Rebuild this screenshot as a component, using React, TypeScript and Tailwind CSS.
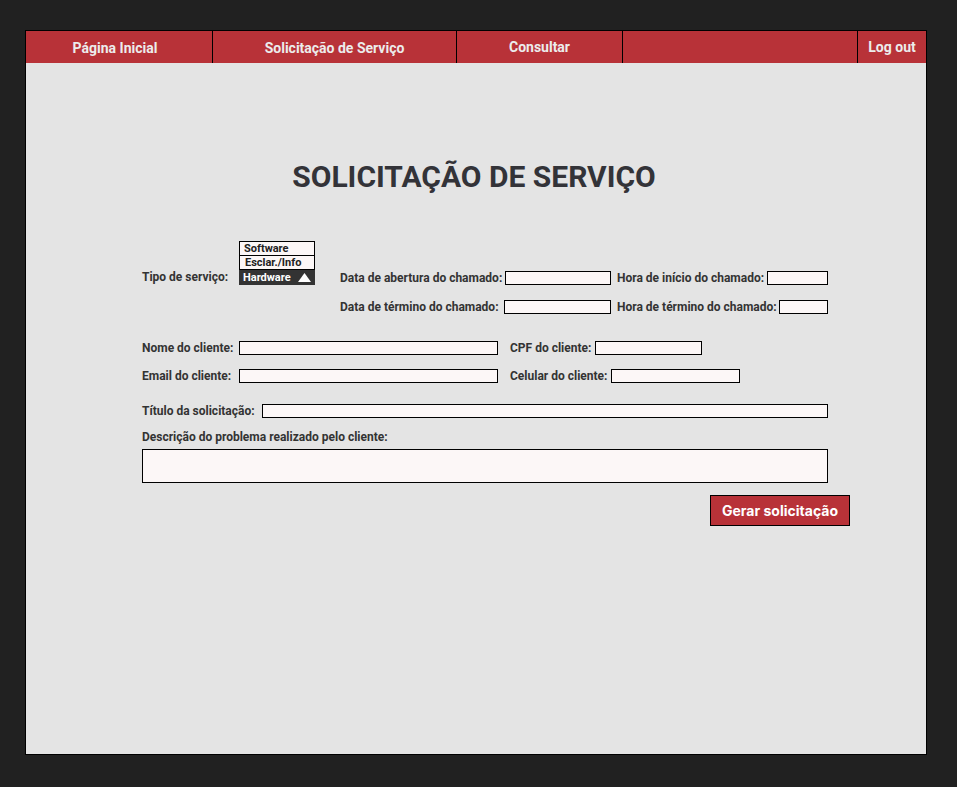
import React from "react";

const inp = "h-[14px] border border-black bg-[#fcf7f7]";
const lbl = "text-[12px] font-bold text-[#333333] whitespace-nowrap leading-none";

export default function App() {
  return (
    <div className="min-h-[787px] w-[957px] bg-[#212121] pt-[30px] pl-[25px]" style={{ fontFamily: "Roboto, 'Liberation Sans', sans-serif" }}>
      <div className="w-[902px] h-[725px] border border-black bg-[#e4e4e4] flex flex-col">
        <nav className="h-[32px] flex bg-[#b83238] text-[14px] font-bold text-[#ececec]">
          <div className="w-[187px] border-r border-black flex items-center justify-center pt-[2px] pr-[8px]">Página Inicial</div>
          <div className="w-[244px] border-r border-black flex items-center justify-center pt-[2px]">Solicitação de Serviço</div>
          <div className="w-[166px] border-r border-black flex items-center justify-center">Consultar</div>
          <div className="w-[235px] border-r border-black"></div>
          <div className="w-[68px] flex items-center justify-center">Log out</div>
        </nav>

        <h1 className="mt-[96px] text-center text-[30px] font-bold text-[#333338] leading-[36px] pr-[4px]">SOLICITAÇÃO DE SERVIÇO</h1>

        <div className="pl-[116px] mt-[47px] flex flex-col">
          <div className="flex items-start">
            <div className="flex items-end h-[43px]">
              <span className={lbl + " w-[97px] pb-[2px]"}>Tipo de serviço:</span>
              <div className="w-[76px] flex flex-col text-[11px] font-bold leading-none">
                <div className="h-[15px] border border-black bg-[#fcf7f7] text-[#222] pl-[4px] flex items-center">Software</div>
                <div className="h-[14px] border border-t-0 border-black bg-[#fcf7f7] text-[#222] pl-[5px] flex items-center">Esclar./Info</div>
                <div className="h-[15px] bg-[#333333] text-white pl-[4px] pr-[4px] flex items-center justify-between">
                  <span>Hardware</span>
                  <svg width="13" height="9" viewBox="0 0 13 9"><polygon points="6.5,0 13,9 0,9" fill="#ffffff" /></svg>
                </div>
              </div>
            </div>
            <div className="ml-[25px] mt-[29px] flex flex-col gap-[15px]">
              <div className="flex items-center">
                <span className={lbl + " w-[165px]"}>Data de abertura do chamado:</span>
                <div className={inp + " w-[106px]"}></div>
                <span className={lbl + " w-[150px] ml-[6px]"}>Hora de início do chamado:</span>
                <div className={inp + " w-[61px]"}></div>
              </div>
              <div className="flex items-center">
                <span className={lbl + " w-[164px]"}>Data de término do chamado:</span>
                <div className={inp + " w-[107px]"}></div>
                <span className={lbl + " w-[162px] ml-[6px]"}>Hora de término do chamado:</span>
                <div className={inp + " w-[49px]"}></div>
              </div>
            </div>
          </div>

          <div className="mt-[27px] flex flex-col gap-[14px]">
            <div className="flex items-center">
              <span className={lbl + " w-[97px]"}>Nome do cliente:</span>
              <div className={inp + " w-[259px]"}></div>
              <span className={lbl + " w-[85px] ml-[12px]"}>CPF do cliente:</span>
              <div className={inp + " w-[107px]"}></div>
            </div>
            <div className="flex items-center">
              <span className={lbl + " w-[97px]"}>Email do cliente:</span>
              <div className={inp + " w-[259px]"}></div>
              <span className={lbl + " w-[101px] ml-[12px]"}>Celular do cliente:</span>
              <div className={inp + " w-[129px]"}></div>
            </div>
          </div>

          <div className="mt-[21px] flex items-center">
            <span className={lbl + " w-[120px]"}>Título da solicitação:</span>
            <div className={inp + " w-[566px]"}></div>
          </div>

          <div className={lbl + " mt-[13px]"}>Descrição do problema realizado pelo cliente:</div>
          <div className="mt-[6px] w-[686px] h-[34px] border border-black bg-[#fcf7f7]"></div>

          <div className="w-[708px] flex justify-end mt-[12px]">
            <button className="w-[140px] h-[31px] bg-[#b83238] border border-black text-white text-[14px] font-bold" style={{ fontFamily: "Inter, 'Liberation Sans', sans-serif" }}>Gerar solicitação</button>
          </div>
        </div>
      </div>
    </div>
  );
}
